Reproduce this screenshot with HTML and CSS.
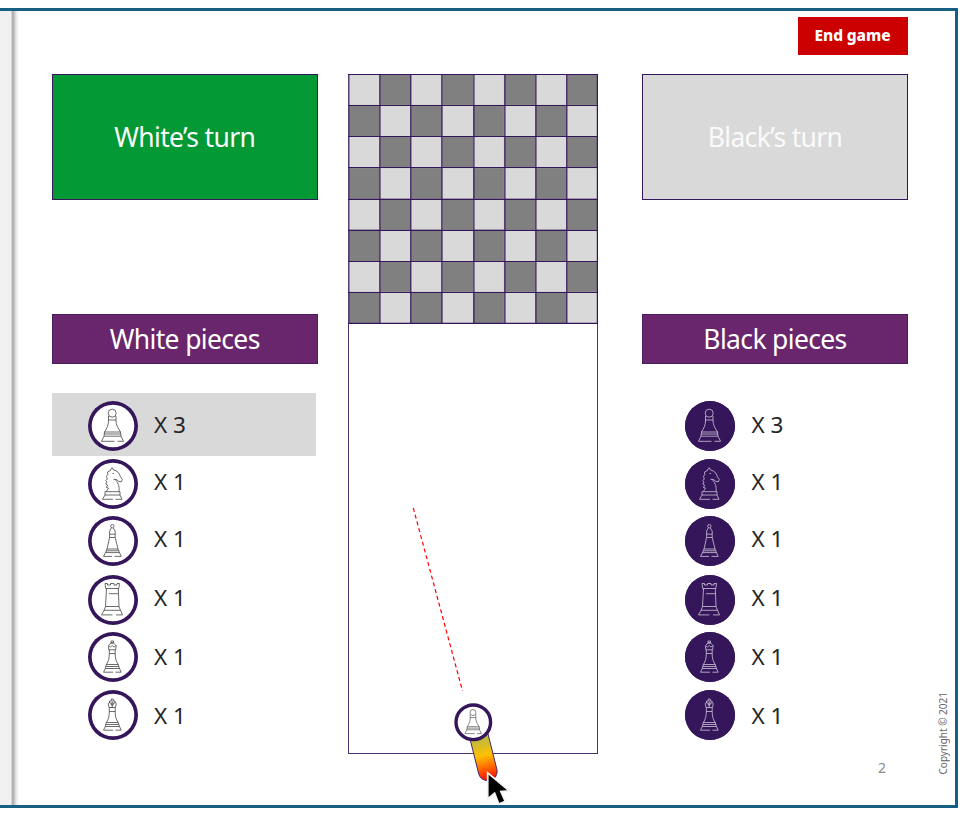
FILE: index.html
```html
<!DOCTYPE html>
<html lang="en">
<head>
<meta charset="utf-8">
<title>Chess launch</title>
<link rel="stylesheet" href="styles.css">
</head>
<body>
<svg class="defs" aria-hidden="true">
  <symbol id="pawn" viewBox="0 0 50 50">
    <circle cx="24.2" cy="12.2" r="4"/>
    <path d="M20.500 15V19H28V15M20.500 19C20.700 24 19 27 16.500 31H32.500C30 27 27.800 24 28 19M16.500 31L16 35.200H33L32.500 31M16.300 33H32.700M16 35.200L13.500 40.300H26.500M29.500 40.300H35.500L33 35.200"/>
  </symbol>
  <symbol id="knight" viewBox="0 0 50 50">
    <path d="M18.500 32.500C19 31 20 30 20.500 29L18.500 28.500L19.500 26L17.800 25L19 23L17.800 21.500L19.300 20L18.500 17.500L19.800 15.500L19.500 13L22.500 11.500L22.800 10L24.300 8.700L25.500 11C29 11.500 31.500 14 32.300 17.500L34.300 20.500L33.500 22.700L31 22.500L28.500 20.500L25.500 20.300M27.300 20.500C31 25 31.500 28.500 31 32.500M24.500 14.500H26M17 32.700H32V36H17ZM17 36L14.500 40.300H25M27.500 40.300H34L32 36"/>
  </symbol>
  <symbol id="bishop" viewBox="0 0 50 50">
    <circle cx="24.300" cy="10.200" r="1.700"/>
    <path d="M23.300 12L21.600 15V18.200H27.200V15L25.300 12M21.600 18.200V21.500H27.200V18.200M21.600 21.500L19 33H30L27.200 21.500M19 33L17.500 36.600H31.500L30 33M18.300 34.800H30.700M17.500 36.600L15.500 40.400H24M26.500 40.400H33.200L31.500 36.600"/>
  </symbol>
  <symbol id="rook" viewBox="0 0 50 50">
    <path d="M17 8.500H19.500V10H22.500V8.500H26V10H29V8.500H31.500L30.800 13.500H17.700ZM18.500 13.500L17.500 31.500H31L30.300 13.500M21 18.700H30M17.500 31.500L16 35.300H32.500L31 31.500M16 35.300L13.500 39.900H24.500M28 39.900H34.500L32.500 35.300"/>
  </symbol>
  <symbol id="queen" viewBox="0 0 50 50">
    <path d="M23 9H25.500V11H23ZM21 13L23 11H25.500L27.700 13M20.500 13.500L22.500 15L24.200 13.500L26 15L28.200 13.500L27.700 17.800H20.800ZM21.300 17.800V21.500H27.200V17.800M21.300 21.500C21.300 26 20.700 29 18.300 32.500H30.200C27.800 29 27.200 26 27.200 21.500M18.300 32.500L17.300 36.500H31.500L30.200 32.500M18 34.500H30.800M17.300 36.500L15.500 40.200H25M27.500 40.200H33.200L31.500 36.500"/>
  </symbol>
  <symbol id="king" viewBox="0 0 50 50">
    <path d="M23.300 9H25.200V11H27V13H25.200V15H23.300V13H21.500V11H23.300ZM21.500 12.500L20.200 13.500L21 17.500H27.500L28.300 13.500L27 12.500M24.200 11V17.500M21.300 17.800V21.500H27.200V17.800M21.300 21.500C21.300 26 20.700 29 18.300 32.500H30.200C27.800 29 27.200 26 27.200 21.500M18.300 32.500L17.300 36.500H31.500L30.200 32.500M18 34.500H30.800M17.300 36.500L15.500 40.200H25M27.500 40.200H33.200L31.500 36.500"/>
  </symbol>
</svg>
<div class="window">
  <aside class="rail"></aside>
  <main class="slide">
    <header class="top"><button class="end">End game</button></header>
    <div class="game">
      <section class="player white">
        <div class="turn active"><span>White’s turn</span></div>
        <h2 class="heading"><span>White pieces</span></h2>
        <ul class="tray">
          <li class="selected"><svg class="disc"><use href="#pawn"/></svg><span>X 3</span></li>
          <li><svg class="disc"><use href="#knight"/></svg><span>X 1</span></li>
          <li><svg class="disc"><use href="#bishop"/></svg><span>X 1</span></li>
          <li><svg class="disc"><use href="#rook"/></svg><span>X 1</span></li>
          <li><svg class="disc"><use href="#queen"/></svg><span>X 1</span></li>
          <li><svg class="disc"><use href="#king"/></svg><span>X 1</span></li>
        </ul>
      </section>
      <section class="arena">
        <svg class="board" viewBox="0 0 250 250">
          <defs>
            <pattern id="squares" width="62.300" height="62.300" patternUnits="userSpaceOnUse" x=".6" y=".2">
              <rect width="62.300" height="62.300" fill="#d9d9d9"/>
              <path fill="#808080" d="M31.150 0H62.300V31.150H31.150ZM0 31.150H31.150V62.300H0Z"/>
            </pattern>
          </defs>
          <rect x=".6" y=".2" width="249.200" height="249.200" fill="url(#squares)"/>
          <path class="lines" d="M0 .5H250M0 31.500H250M0 62.500H250M0 93.500H250M0 125.300H250M0 156.400H250M0 187.500H250M0 218.500H250M0 249.300H250M.8 0V250M31.900 0V250M62.800 0V250M93.900 0V250M125.900 0V250M156.900 0V250M187.900 0V250M218.800 0V250M249.400 0V250"/>
        </svg>
        <div class="lane"></div>
        <svg class="shot" viewBox="348 74 251 740">
          <defs>
            <linearGradient id="power" gradientUnits="userSpaceOnUse" x1="0" y1="12" x2="0" y2="59">
              <stop offset="0" stop-color="#a9b853"/><stop offset=".46" stop-color="#ffc000"/><stop offset=".9" stop-color="#ff2a00"/><stop offset="1" stop-color="#ff0000"/>
            </linearGradient>
          </defs>
          <path class="aim" d="M413.300 508L462.500 691"/>
          <g transform="translate(475 723) rotate(-14)">
            <path class="power" fill="url(#power)" d="M-8.700 0H10V50A9.350 9.350 0 0 1 -8.700 50Z"/>
          </g>
          <circle class="puck" cx="473.300" cy="722.300" r="17.300"/>
          <use class="puck-icon" href="#pawn" x="454.800" y="703.400" width="37.500" height="37.500"/>
          <path class="cursor" d="M487.700 772.800V799L494.600 793.200L498.800 804L505.300 801.400L500.900 791.500L509.500 791Z"/>
        </svg>
      </section>
      <section class="player black">
        <div class="turn"><span>Black’s turn</span></div>
        <h2 class="heading"><span>Black pieces</span></h2>
        <ul class="tray">
          <li><svg class="disc"><use href="#pawn"/></svg><span>X 3</span></li>
          <li><svg class="disc"><use href="#knight"/></svg><span>X 1</span></li>
          <li><svg class="disc"><use href="#bishop"/></svg><span>X 1</span></li>
          <li><svg class="disc"><use href="#rook"/></svg><span>X 1</span></li>
          <li><svg class="disc"><use href="#queen"/></svg><span>X 1</span></li>
          <li><svg class="disc"><use href="#king"/></svg><span>X 1</span></li>
        </ul>
        <div class="page">2</div>
      </section>
    </div>
  </main>
  <footer class="copyright">Copyright © 2021</footer>
</div>
</body>
</html>
```

FILE: styles.css
```css
* { box-sizing: border-box; }
body {
  margin: 0;
  padding-top: 8px;
  height: 821px;
  overflow: hidden;
  background: #fff;
  font-family: "Noto Sans", "Open Sans", sans-serif;
}
.defs { display: none; }
.window {
  display: flex;
  width: 958px;
  height: 800px;
  border: solid #156082;
  border-width: 3px 3px 3px 0;
}
.rail {
  flex: none;
  width: 20px;
  background: linear-gradient(90deg, #f0f0f0 11px, #d5d5d5 11px, #d5d5d5 12px, #a9a9a9 12px, #bdbdbd 14px, #e4e4e4 16px, #f8f8f8 18px, #fff 20px);
}
.slide { flex: none; width: 888px; padding-left: 32px; }
.top { display: flex; justify-content: flex-end; height: 63px; padding-top: 6px; }
.end {
  width: 110px;
  height: 38px;
  padding: 0 1px 2px 0;
  border: 0;
  background: #c00;
  color: #fff;
  font: 800 15.500px/36px "Noto Sans", sans-serif;
  letter-spacing: -.1px;
}
.game { display: grid; grid-template-columns: 296px 294px 266px; }
.white { width: 265.500px; }
.turn {
  display: flex;
  align-items: center;
  justify-content: center;
  height: 126px;
  border: 1px solid #35165a;
  background: #d9d9d9;
  color: #fafafa;
  font-size: 26.500px;
  letter-spacing: -.65px;
}
.turn.active { background: #039934; }
.heading {
  display: flex;
  align-items: center;
  justify-content: center;
  height: 50px;
  margin: 114px 0 29px;
  border: 1px solid #4a1c61;
  background: #69266c;
  color: #fff;
  font-size: 26.500px;
  font-weight: 400;
  letter-spacing: -.65px;
}
.tray {
  display: grid;
  grid-template-rows: 63px 57px 57px 60px 55px 60px;
  margin: 0;
  padding: 0;
  list-style: none;
}
.tray li { display: flex; align-items: center; gap: 16.500px; padding-left: 35.500px; width: 264px; }
.black .tray li { padding-left: 43px; }
.tray li:first-child { padding-top: 3px; }
.tray .selected { background: #d9d9d9; }
.tray span { margin-bottom: 5px; color: #262626; font-size: 22.500px; line-height: 30px; letter-spacing: 0; }
.tray li:first-child span { margin-bottom: 2px; }
.tray li:nth-child(4) span { margin-bottom: 4px; }
.tray li:nth-child(5) span { margin-bottom: 2px; }
.tray li:nth-child(6) span { margin-bottom: -1px; }
.disc {
  width: 50px;
  height: 50px;
  border-radius: 50%;
  background: #fff;
  box-shadow: inset 0 0 0 3.700px #35165a;
  fill: none;
  stroke: #3b3b3b;
  stroke-width: .75;
}
.tray li:nth-child(2) .disc,
.tray li:nth-child(3) .disc,
.tray li:nth-child(5) .disc { margin-top: -1px; }
.black .disc { background: #35165a; stroke: #d9d2e3; }
.arena { position: relative; display: flex; flex-direction: column; width: 251px; height: 680px; }
.board { display: block; flex: none; width: 250px; height: 250px; }
.lines { fill: none; stroke: #35165a; stroke-width: 1.200; }
.lane { flex: 1; width: 250px; border: 1px solid #4c3070; border-top: 0; }
.shot { position: absolute; left: 0; top: 0; width: 251px; height: 740px; overflow: visible; }
.aim { fill: none; stroke: #f00; stroke-width: 1.200; stroke-dasharray: 4 3; }
.power { stroke: #4b2a70; stroke-width: 1; }
.puck { fill: #fff; stroke: #35165a; stroke-width: 3.400; }
.puck-icon { fill: none; stroke: #3b3b3b; stroke-width: .8; }
.cursor { fill: #000; stroke: #f4f4f4; stroke-width: 1.800; }
.page { margin: 13px 22px 0; text-align: right; color: #8a8a8a; font-size: 14px; line-height: 20px; }
.copyright {
  align-self: flex-end;
  margin: 0 0 31px 28px;
  writing-mode: vertical-rl;
  text-orientation: sideways;
  transform: rotate(180deg);
  color: #666;
  font-size: 10px;
  line-height: 14px;
  white-space: nowrap;
}
```
